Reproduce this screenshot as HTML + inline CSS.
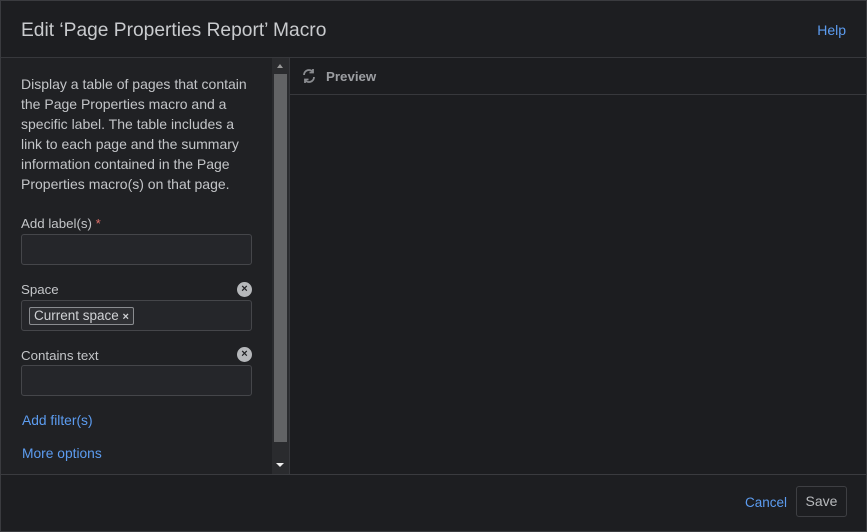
<!DOCTYPE html>
<html><head><style>
*{box-sizing:border-box;margin:0;padding:0}
body{width:867px;height:532px;background:#1d1e21;font-family:"Liberation Sans",sans-serif;position:relative;overflow:hidden;color:#c7c9cc}
.frame{position:absolute;left:0;top:0;width:867px;height:532px;border:1px solid #3a3b3f}
.hdr{position:absolute;left:1px;top:1px;width:865px;height:57px;border-bottom:1px solid #37383c;background:#1d1e21}
.hdr h1{position:absolute;left:20px;top:19px;font-size:19.2px;font-weight:normal;color:#c9cbce}
.help{position:absolute;right:20px;top:21px;font-size:14px;color:#5c9cf0}
.left{position:absolute;left:1px;top:58px;width:271px;height:416px;background:#202124}
.desc{position:absolute;left:20px;top:16px;width:250px;font-size:14px;line-height:20px;color:#c3c5c8;white-space:nowrap}
.lbl{position:absolute;left:20px;font-size:13.3px;color:#c3c5c8}
.in{position:absolute;left:20px;width:231px;height:31px;border:1px solid #45464a;border-radius:3px;background:#25262a}
.x{position:absolute;left:236px;width:15px;height:15px;border-radius:50%;background:#b5b7ba;color:#202124;font-size:11px;font-weight:bold;text-align:center;line-height:15px}
.link{position:absolute;left:21px;font-size:13.8px;color:#5c9cf0}
.tag{position:absolute;left:7px;top:6px;height:18px;border:1px solid #8a8c90;border-radius:2px;background:#2f3034;font-size:13.5px;line-height:16px;padding:0 4px;color:#d0d2d5;white-space:nowrap}
.sb{position:absolute;left:272px;top:58px;width:17px;height:416px;background:#2a2b2e}
.thumb{position:absolute;left:2px;top:16px;width:13px;height:368px;background:#626365}
.prev{position:absolute;left:289px;top:58px;width:577px;height:416px;background:#1c1d20;border-left:1px solid #37383c}
.ph{height:37px;border-bottom:1px solid #37383c;font-size:13.3px;font-weight:bold;color:#9c9ea2;padding:11px 0 0 36px}
.foot{position:absolute;left:1px;top:474px;width:865px;height:57px;border-top:1px solid #3a3b3f;background:#1d1e21}
.cancel{position:absolute;left:744px;top:20px;font-size:13.5px;color:#5c9cf0}
.save{position:absolute;left:795px;top:11px;width:51px;height:31px;border:1px solid #3e3f43;border-radius:3px;font-size:14px;color:#b8babd;text-align:center;line-height:29px}
</style></head><body>
<div class="hdr"><h1>Edit ‘Page Properties Report’ Macro</h1><span class="help">Help</span></div>
<div class="left">
<div class="desc">Display a table of pages that contain<br>the Page Properties macro and a<br>specific label. The table includes a<br>link to each page and the summary<br>information contained in the Page<br>Properties macro(s) on that page.</div>
<div class="lbl" style="top:158px">Add label(s)<span style="color:#e0706a"> *</span></div>
<div class="in" style="top:176px"></div>
<div class="lbl" style="top:224px">Space</div>
<div class="x" style="top:224px">×</div>
<div class="in" style="top:242px"><span class="tag">Current space <b style="font-size:11px">×</b></span></div>
<div class="lbl" style="top:290px">Contains text</div>
<div class="x" style="top:289px">×</div>
<div class="in" style="top:307px"></div>
<div class="link" style="top:355px">Add filter(s)</div>
<div class="link" style="top:388px">More options</div>
</div>
<div class="sb"><div style="position:absolute;left:5px;top:6px;border:3.5px solid transparent;border-bottom:4px solid #999;border-top:0"></div><div class="thumb"></div><div style="position:absolute;left:4px;top:405px;border:4px solid transparent;border-top:4px solid #eee;border-bottom:0"></div></div>
<div class="prev"><div class="ph"><svg style="position:absolute;left:11px;top:10px" width="16" height="16" viewBox="0 0 16 16" fill="none" stroke="#8a8c90" stroke-width="1.8"><path d="M3 7a5 5 0 0 1 9-3M13 9a5 5 0 0 1-9 3"/><path d="M12 1v3.5H8.5M4 15v-3.5h3.5"/></svg>Preview</div></div>
<div class="foot"><span class="cancel">Cancel</span><div class="save">Save</div></div>
<div class="frame"></div>
</body></html>
